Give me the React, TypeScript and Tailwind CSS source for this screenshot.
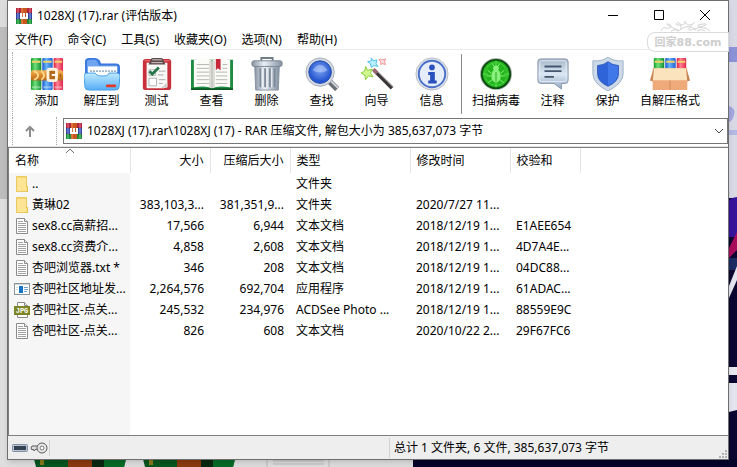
import type { ReactNode } from "react";

/* 小图标: 压缩包 */
function RarIcon() {
  return (
    <svg className="size-4 shrink-0" viewBox="0 0 16 16">
      <rect y="0" width="16" height="5" fill="#b5243f" />
      <rect y="5" width="16" height="6" fill="#3346a8" />
      <rect y="11" width="16" height="5" fill="#1d8a3c" />
      <path d="M0 5h16M0 11h16" stroke="#2b2233" strokeOpacity=".5" />
      <path d="M2 0v5M14 0v5" stroke="#e8798a" />
      <path d="M2 5v6M14 5v6" stroke="#8fa2e6" />
      <path d="M2 11v5M14 11v5" stroke="#6fd07f" />
      <rect x="5" width="6" height="16" fill="#c8561f" />
      <path d="M6 0v16" stroke="#ef935b" />
      <path d="M5 5v5h6V5M8 5v4" fill="none" stroke="#fff" strokeWidth="2" />
    </svg>
  );
}

function FolderIcon() {
  return (
    <svg className="size-4 shrink-0" viewBox="0 0 16 16">
      <path d="M2 1h11v9h1v6H2z" fill="#f7d774" />
      <path d="M3 2h9v13H3z" fill="#fde594" />
      <path d="M2.500 .500h10v15h-10z" fill="none" stroke="#ecc95f" />
      <path d="M12 10.500h1.500v5H12" fill="#fbe08a" stroke="#e5bd4b" />
    </svg>
  );
}

function TextIcon() {
  return (
    <svg className="size-4 shrink-0" viewBox="0 0 16 16">
      <path d="M2.500 .500h8l3 3v12h-11z" fill="#fff" stroke="#8a8a8a" />
      <path d="M10.500 .500v3h3" fill="#eee" stroke="#8a8a8a" />
      <path d="M4 3.500h5M4 5.500h8M4 7.500h8M4 9.500h8M4 11.500h8M4 13.500h8" stroke="#a3a3a3" />
    </svg>
  );
}

function ExeIcon() {
  return (
    <svg className="size-4 shrink-0" viewBox="0 0 16 16">
      <rect x=".5" y="2.500" width="15" height="11" fill="#fff" stroke="#8b9499" />
      <path d="M1 3.500h14" stroke="#cfd6da" />
      <rect x="5" y="5" width="4" height="7" fill="#1673c4" />
      <path d="M10 6.500h4M10 8.500h4M10 10.500h3" stroke="#72a7d4" />
      <path d="M2 6.500h2M2 8.500h2" stroke="#d5dde2" />
    </svg>
  );
}

function JpgIcon() {
  return (
    <svg className="size-4 shrink-0" viewBox="0 0 16 16">
      <path d="M3.500 .500h7l3 3v12h-10z" fill="#fff" stroke="#8a8a8a" />
      <path d="M10.500 .500v3h3" fill="#eee" stroke="#8a8a8a" />
      <rect y="4" width="16" height="9" fill="#7d8527" />
      <text x="8" y="11" fontSize="7" fontWeight="700" textAnchor="middle" fill="#fff" fontFamily="Liberation Mono, monospace">
        JPG
      </text>
    </svg>
  );
}

/* 工具栏图标 */
function BigIcon({ children }: { children: ReactNode }) {
  return (
    <svg className="size-[34px] shrink-0" viewBox="0 0 36 36">
      {children}
    </svg>
  );
}

const addIcon = (
  <BigIcon>
    <defs>
      <linearGradient id="bookG">
        <stop offset="0" stopColor="#159a2b" />
        <stop offset=".4" stopColor="#6fe07a" />
        <stop offset="1" stopColor="#118a35" />
      </linearGradient>
      <linearGradient id="bookB">
        <stop offset="0" stopColor="#1a58c8" />
        <stop offset=".4" stopColor="#6ab4fa" />
        <stop offset="1" stopColor="#1c5fd0" />
      </linearGradient>
      <linearGradient id="bookR">
        <stop offset="0" stopColor="#d81f40" />
        <stop offset=".4" stopColor="#ff7f90" />
        <stop offset="1" stopColor="#e0274f" />
      </linearGradient>
      <linearGradient id="belt" x2="0" y2="1">
        <stop offset="0" stopColor="#f3b85a" />
        <stop offset=".5" stopColor="#da8a2a" />
        <stop offset="1" stopColor="#b0651a" />
      </linearGradient>
    </defs>
    <rect x="1" y="1" width="11" height="34" rx="1" fill="url(#bookG)" />
    <rect x="13" y="1" width="11" height="34" rx="1" fill="url(#bookB)" />
    <rect x="25" y="1" width="10" height="34" rx="1" fill="url(#bookR)" />
    <path d="M2 5h9M14 5h9M26 5h8" stroke="#f2d36b" strokeWidth="2" />
    <path d="M2 32h9M14 32h9M26 32h8" stroke="#fff" strokeOpacity=".35" strokeWidth="2" />
    <rect x="1" y="14" width="34" height="11" rx="2" fill="url(#belt)" />
    <path d="M4 15c6 2 6 7 0 9M12 15c4 3 4 6 0 9" stroke="#ffd98b" fill="none" strokeWidth="2" />
    <rect x="19" y="13" width="9" height="12" rx="2" fill="#b46a1c" stroke="#fff3dc" strokeWidth="3" />
    <path d="M23 19h6" stroke="#fff" strokeWidth="2" />
    <path d="M32 18v3" stroke="#7d430d" />
  </BigIcon>
);

const extractIcon = (
  <svg className="h-[34px] w-[36px] shrink-0" viewBox="0 0 36 36" preserveAspectRatio="none">
    <defs>
      <linearGradient id="fold" x2="0" y2="1">
        <stop offset="0" stopColor="#bfeaff" />
        <stop offset="1" stopColor="#55aef6" />
      </linearGradient>
    </defs>
    <path d="M1 5q0-4 4-4h6q3 0 5 3l1 3h15q4 0 4 4v15H1z" fill="#3b79dc" />
    <path d="M3 5q0-2 3-2h5q2 0 4 6h17q2 0 2 3v4H3z" fill="#6fa4f0" />
    <path d="M4 10h29v12H4z" fill="#fff" />
    <path d="M6 15h26" stroke="#9fb3cc" strokeWidth="2" strokeDasharray="2 1" />
    <path d="M0 20q0-3 3-3h8l2 2q1 1 3 1h5q2 0 3-1l1-2h8q3 0 3 3l-1 12q0 3-4 3H5q-4 0-4-3z" fill="url(#fold)" stroke="#4a9fe8" />
    <rect x="22" y="29" width="10" height="3" rx="1" fill="#e03a2b" />
  </svg>
);

const testIcon = (
  <BigIcon>
    <rect x="3" y="2" width="30" height="33" rx="3" fill="#c8303c" />
    <path d="M5 4h26" stroke="#ef7b82" />
    <path d="M7 6h22v26l-4 1H7z" fill="#f8f8f6" />
    <path d="M22 33l7-6v5z" fill="#cfcfcf" />
    <path d="M11 4q0-3 3-3h8q3 0 3 3l2 4H9z" fill="#5c4a4a" />
    <path d="M13 3h10M12 6h12" stroke="#ddd2d2" />
    <path d="M9.500 13.500h7v6h-7zM9.500 22.500h8v8h-8z" fill="#fff" stroke="#aeb2b4" />
    <path d="M10 15l3 3 7-7" stroke="#27784a" strokeWidth="3" fill="none" />
    <path d="M20 15h7M19 19h6M20 24h7M20 28h4" stroke="#a5a9ab" />
  </BigIcon>
);

const viewIcon = (
  <svg className="h-[34px] w-[42px] shrink-0" viewBox="0 0 44 36" preserveAspectRatio="none">
    <path d="M0 3h44v32H0z" fill="#1e8b41" />
    <path d="M0 34h44" stroke="#0d5725" strokeWidth="2" />
    <path d="M3 3q13-3 19 1 6-4 19-1v29q-13-2-19 1-6-3-19-1z" fill="#fbfbf8" />
    <path d="M22 4v29" stroke="#8f8f8c" />
    <path d="M20 4v28M24 4v28" stroke="#dcdcd6" strokeWidth="2" />
    <path d="M6 8h13M6 12h13M6 16h13M6 20h13M6 24h13M6 28h13M33 8h5M33 12h5M26 16h12M26 20h12M26 24h12M26 28h12" stroke="#b4b4b0" />
    <path d="M26 2h5v12l-3-2-2 2z" fill="#c6283a" />
  </svg>
);

const deleteIcon = (
  <BigIcon>
    <defs>
      <linearGradient id="can">
        <stop offset="0" stopColor="#8793a1" />
        <stop offset=".4" stopColor="#eaf0f6" />
        <stop offset="1" stopColor="#8391a0" />
      </linearGradient>
    </defs>
    <path d="M12 4V1h12v3" fill="none" stroke="#727d8a" strokeWidth="2" />
    <path d="M5 9h26l-1 26H6z" fill="url(#can)" stroke="#8591a0" />
    <path d="M11 12v20M16 12v20M21 12v20M26 12v20" stroke="#7e8a99" strokeWidth="2" />
    <path d="M13 12v20M18 12v20M23 12v20" stroke="#f4f8fb" />
    <rect x="2" y="4" width="32" height="6" rx="2" fill="url(#can)" stroke="#7a8694" />
  </BigIcon>
);

const findIcon = (
  <BigIcon>
    <defs>
      <radialGradient id="lens" cy=".4">
        <stop offset="0" stopColor="#7fa4f5" />
        <stop offset="1" stopColor="#2456cf" />
      </radialGradient>
    </defs>
    <path d="M26 26l8 8" stroke="#6a6f75" strokeWidth="6" />
    <path d="M27 25l8 8" stroke="#d3d8dd" strokeWidth="2" />
    <circle cx="16" cy="16" r="15" fill="#d6dce4" stroke="#a2acb8" />
    <circle cx="16" cy="16" r="12" fill="url(#lens)" stroke="#2c4fa8" />
    <path d="M8 14q8-11 16 0-8 5-16 0z" fill="#c6dafc" fillOpacity=".5" />
  </BigIcon>
);

const wizardIcon = (
  <BigIcon>
    <path d="M15 14l19 19" stroke="#3a3536" strokeWidth="4" />
    <path d="M16 13l19 19" stroke="#a9a5a5" />
    <path d="M14 13l4 4" stroke="#9b6a70" strokeWidth="4" />
    <path d="M6 10l2 4 5-1-2 4 3 4-5-1-3 4-1-5-4-2 4-2z" fill="#d3f58f" stroke="#86cf37" />
    <path d="M12 1l2 3 4-1-1 4 2 3-4-1-3 2-1-4-3-2 4-1z" fill="#b7efff" stroke="#4dbde6" />
    <path d="M22 2l2 1 3-1-1 3 1 3-3-1-2 1v-3l-2-2z" fill="#ffe0e0" stroke="#f08d8d" />
  </BigIcon>
);

const infoIcon = (
  <BigIcon>
    <circle cx="18" cy="18" r="17" fill="#dfe3e9" stroke="#b5bbc4" />
    <circle cx="18" cy="18" r="14" fill="#e5ecfa" stroke="#4a6fc8" strokeWidth="2" />
    <circle cx="18" cy="11" r="3" fill="#2a50c0" />
    <path d="M14 16h7v9h2v3h-9v-3h2v-6h-2z" fill="#2a50c0" />
  </BigIcon>
);

const virusIcon = (
  <BigIcon>
    <circle cx="18" cy="18" r="17" fill="#b2bab2" />
    <circle cx="18" cy="18" r="15" fill="#22b51c" stroke="#0b4d10" strokeWidth="2" />
    <path d="M18 4v6M18 27v5M4 18h5M27 18h5" stroke="#6ae85e" />
    <circle cx="18" cy="18" r="12" fill="none" stroke="#4ace40" />
    <ellipse cx="18" cy="20" rx="5" ry="7" fill="#8af07c" />
    <circle cx="18" cy="12" r="3" fill="#8af07c" />
    <path d="M13 17l-4-3M13 20H8M14 24l-4 3M23 17l4-3M23 20h5M22 24l4 3M16 10l-2-3M20 10l2-3" stroke="#8af07c" />
    <path d="M18 16v10" stroke="#18a816" />
  </BigIcon>
);

const commentIcon = (
  <BigIcon>
    <defs>
      <linearGradient id="bubble" x2="0" y2="1">
        <stop offset="0" stopColor="#a5b5c8" />
        <stop offset=".5" stopColor="#dbe7f4" />
        <stop offset="1" stopColor="#93aac3" />
      </linearGradient>
    </defs>
    <path d="M5 2h26q3 0 3 3v20q0 3-3 3h-4v6l-8-6H5q-3 0-3-3V5q0-3 3-3z" fill="url(#bubble)" stroke="#8797aa" />
    <rect x="4" y="4" width="28" height="22" rx="2" fill="none" stroke="#e4edf6" />
    <path d="M9 10h18M9 15h18M9 21h10" stroke="#44566c" strokeWidth="2" />
  </BigIcon>
);

const protectIcon = (
  <BigIcon>
    <path d="M18 0q6 5 16 4v14q0 10-16 18Q2 28 2 18V4q10 1 16-4z" fill="#cbd9e8" stroke="#9eb0c4" />
    <path d="M18 5q5 4 11 4v9q0 8-11 13Q7 26 7 18V9q6 0 11-4z" fill="#2f63d8" />
    <path d="M18 5q5 4 11 4v9q0 8-11 13z" fill="#4078ea" />
    <path d="M18 5q5 4 11 4v9q0 8-11 13Q7 26 7 18V9q6 0 11-4z" fill="none" stroke="#3158b8" />
  </BigIcon>
);

const sfxIcon = (
  <svg className="h-[34px] w-[42px] shrink-0" viewBox="0 0 44 36" preserveAspectRatio="none">
    <rect x="5" y="1" width="11" height="14" rx="1" fill="url(#bookG)" />
    <rect x="17" y="1" width="11" height="14" rx="1" fill="url(#bookB)" />
    <rect x="29" y="1" width="10" height="14" rx="1" fill="url(#bookR)" />
    <path d="M6 5h9M18 5h9M30 5h8" stroke="#f2d36b" strokeWidth="2" />
    <path d="M4 12h36v23H4z" fill="#efaa7c" />
    <path d="M5 12h34l1 13H4z" fill="#fbe3bd" />
    <path d="M5 11L1 25l3 1zM39 11l4 14-3 1z" fill="#c98252" />
    <path d="M4 25h36v10H4z" fill="#efaa7c" />
    <path d="M22 25v10" stroke="#d08a5c" />
  </svg>
);

const tools = [
  { label: "添加", icon: addIcon },
  { label: "解压到", icon: extractIcon },
  { label: "测试", icon: testIcon },
  { label: "查看", icon: viewIcon },
  { label: "删除", icon: deleteIcon },
  { label: "查找", icon: findIcon },
  { label: "向导", icon: wizardIcon },
  { label: "信息", icon: infoIcon },
];

const extraTools = [
  { label: "扫描病毒", icon: virusIcon },
  { label: "注释", icon: commentIcon },
  { label: "保护", icon: protectIcon },
  { label: "自解压格式", icon: sfxIcon },
];

const menus = ["文件(F)", "命令(C)", "工具(S)", "收藏夹(O)", "选项(N)", "帮助(H)"];

const files = [
  { icon: <FolderIcon />, name: "..", size: "", packed: "", type: "文件夹", time: "", crc: "" },
  { icon: <FolderIcon />, name: "黃琳02", size: "383,103,3...", packed: "381,351,9...", type: "文件夹", time: "2020/7/27 11...", crc: "" },
  { icon: <TextIcon />, name: "sex8.cc高薪招...", size: "17,566", packed: "6,944", type: "文本文档", time: "2018/12/19 1...", crc: "E1AEE654" },
  { icon: <TextIcon />, name: "sex8.cc资费介...", size: "4,858", packed: "2,608", type: "文本文档", time: "2018/12/19 1...", crc: "4D7A4E..." },
  { icon: <TextIcon />, name: "杏吧浏览器.txt *", size: "346", packed: "208", type: "文本文档", time: "2018/12/19 1...", crc: "04DC88..." },
  { icon: <ExeIcon />, name: "杏吧社区地址发...", size: "2,264,576", packed: "692,704", type: "应用程序", time: "2018/12/19 1...", crc: "61ADAC..." },
  { icon: <JpgIcon />, name: "杏吧社区-点关...", size: "245,532", packed: "234,976", type: "ACDSee Photo ...", time: "2018/12/19 1...", crc: "88559E9C" },
  { icon: <TextIcon />, name: "杏吧社区-点关...", size: "826", packed: "608", type: "文本文档", time: "2020/10/22 2...", crc: "29F67FC6" },
];

function ToolButton({ label, icon }: { label: string; icon: ReactNode }) {
  return (
    <button type="button" className="flex min-w-[55px] flex-col items-center gap-[2px] px-[5px]">
      {icon}
      <span className="whitespace-nowrap leading-4">{label}</span>
    </button>
  );
}

/* 窗口后面的桌面 */
function Desktop() {
  return (
    <div className="absolute inset-0 flex flex-col overflow-hidden bg-[#dedede]">
      <div className="flex min-h-0 flex-1 justify-between">
        <div className="flex w-2 flex-col">
          <div className="h-[27px] bg-[#dcdcdc]" />
          <div className="h-[172px] bg-[#bdbdbd]" />
        </div>
        <svg className="h-[459px] w-2" viewBox="0 0 8 459">
          <rect width="8" height="459" fill="#0b0730" />
          <rect width="8" height="198" fill="#d9d9e6" />
          <rect y="47" width="8" height="15" fill="#8c92d6" />
          <path d="M0 106q7 2 5 9t-5 7z" fill="#a3a6dc" />
          <rect y="130" width="8" height="5" fill="#b5b8e4" />
          <path d="M0 200q4-3 8-3v40H0z" fill="#35149a" />
          <path d="M0 248l8-16v18l-8 8z" fill="#a80d5c" />
          <path d="M0 258h8v12H0z" fill="#1b2a60" />
          <path d="M0 286l8-20v14l-8 18z" fill="#e4e4ee" />
          <rect y="367" width="8" height="8" fill="#e8e8ee" />
          <path d="M0 383h8v27l-8 2z" fill="#e4e4ee" />
        </svg>
      </div>
      <div className="flex h-2">
        <svg className="h-2 w-[413px]" viewBox="0 0 413 8">
          <path d="M34 0h92l-2 8H36zM143 0h92l-2 8h-88z" fill="#07561f" />
          <path d="M92 0h34l-2 8H92zM201 0h34l-2 8h-32z" fill="#056b26" />
          <path d="M68 0h24v8H68zM177 0h24v8h-24z" fill="#8a3a10" />
          <path d="M92 0h12v8H92zM201 0h12v8h-12z" fill="#0a2710" />
          <path d="M40 0h4v6h-4zM149 0h4v6h-4z" fill="#8a7a1c" />
          <path d="M267 0v8M329 0v8M273 2h51M273 5h51" stroke="#b9b9b9" />
        </svg>
        <div className="flex-1 bg-[#07042a]" />
      </div>
    </div>
  );
}

function Watermark() {
  return (
    <div className="pointer-events-none absolute right-2 top-5 flex w-[82px] flex-col">
      <svg className="h-3 w-[82px]" viewBox="0 0 82 12">
        <path
          d="M14 11q1-4 5-3t5-1-3-3 5 4 8-1-4-4 3 2 5-4q1 4 4 4t5-2-4 4 8 1 5-4-3 3 5 1 5 3M33 10q8-7 16 0M24 11q4-3 8 0M50 11q4-3 8 0"
          fill="none"
          stroke="#d4d4d4"
        />
      </svg>
      <div className="h-5 rounded-l-lg border border-[#dadada] bg-white text-center font-['DejaVu_Sans','Noto_Sans_CJK_SC',sans-serif] text-[11px] font-bold leading-5 text-[#cecece]">
        回家88.com
      </div>
    </div>
  );
}

export default function App() {
  return (
    <div className="relative h-screen font-['Noto_Sans','Noto_Sans_CJK_SC',sans-serif] text-xs text-black">
      <Desktop />
      <div className="relative h-full pb-[7px] pl-[7px] pr-2">
        <div className="flex h-full flex-col border border-[#6e6e6e] bg-white shadow-md">
          {/* 标题栏 */}
          <header className="flex h-[29px] shrink-0 items-center justify-between pl-2">
            <div className="flex items-center gap-[5px]">
              <RarIcon />
              <h1 className="whitespace-nowrap">1028XJ (17).rar (评估版本)</h1>
            </div>
            <div className="flex">
              <button type="button" aria-label="最小化" className="flex w-[46px] justify-center">
                <svg className="size-[11px]" viewBox="0 0 11 11">
                  <path d="M0 5.500h10" stroke="#000" />
                </svg>
              </button>
              <button type="button" aria-label="最大化" className="flex w-[46px] justify-center">
                <svg className="size-[11px]" viewBox="0 0 11 11">
                  <path d="M.5.5h9v9h-9z" fill="none" stroke="#000" />
                </svg>
              </button>
              <button type="button" aria-label="关闭" className="flex w-[46px] justify-center">
                <svg className="size-[11px]" viewBox="0 0 11 11">
                  <path d="M0 0l10 10M10 0L0 10" stroke="#000" />
                </svg>
              </button>
            </div>
          </header>

          {/* 菜单 */}
          <nav className="flex h-5 shrink-0 items-center gap-[15px] border-b border-[#ececec] pl-[7px] pt-px">
            {menus.map((m) => (
              <button key={m} type="button" className="whitespace-nowrap leading-4">
                {m}
              </button>
            ))}
          </nav>

          {/* 工具栏 */}
          <div className="flex h-[66px] shrink-0 pl-1 pt-[2px]">
            <div className="mr-[6px] border-l border-dotted border-[#a8a8a8]" />
            <div className="flex pt-[5px]">
              {tools.map((t) => (
                <ToolButton key={t.label} label={t.label} icon={t.icon} />
              ))}
            </div>
            <div className="my-[2px] ml-[2px] mr-[5px] w-px shrink-0 bg-[#8c8c8c]" />
            <div className="flex pt-[5px]">
              {extraTools.map((t) => (
                <ToolButton key={t.label} label={t.label} icon={t.icon} />
              ))}
            </div>
          </div>

          {/* 地址栏 */}
          <div className="flex h-[31px] shrink-0 items-center border-b border-[#e3e3e3] pl-1">
            <div className="h-7 border-l border-dotted border-[#a8a8a8]" />
            <button type="button" aria-label="向上" className="flex w-[43px] justify-center pr-[9px]">
              <svg className="size-3" viewBox="0 0 12 12">
                <path d="M6 12V2M2 6l4-4 4 4" fill="none" stroke="#8c8c8c" strokeWidth="2" />
              </svg>
            </button>
            <div className="h-7 border-l border-dotted border-[#a8a8a8]" />
            <label className="ml-[6px] flex h-[26px] flex-1 items-center border border-[#767676] pl-[2px] pr-[3px]">
              <RarIcon />
              <select aria-label="地址" className="ml-[5px] flex-1 appearance-none bg-transparent outline-none">
                <option>1028XJ (17).rar\1028XJ (17) - RAR 压缩文件, 解包大小为 385,637,073 字节</option>
              </select>
              <svg className="size-[10px]" viewBox="0 0 10 10">
                <path d="M1 3l4 4 4-4" fill="none" stroke="#4a4a4a" />
              </svg>
            </label>
          </div>

          {/* 文件列表 */}
          <div className="relative min-h-0 flex-1 overflow-hidden border-y border-l border-[#7b807b] bg-[linear-gradient(to_right,#f6f6f6_121px,#fff_121px)]">
            <table className="w-full table-fixed whitespace-nowrap">
              <colgroup>
                <col className="w-[121px]" />
                <col className="w-20" />
                <col className="w-20" />
                <col className="w-[120px]" />
                <col className="w-[100px]" />
                <col className="w-[70px]" />
                <col />
              </colgroup>
              <thead className="bg-white">
                <tr className="h-[25px] text-left [&>th]:border-r [&>th]:border-[#e5e5e5] [&>th]:px-[6px] [&>th]:font-normal">
                  <th>
                    <svg className="absolute left-[57px] top-0 h-[6px] w-2" viewBox="0 0 8 6">
                      <path d="M0 5l4-4 4 4" fill="none" stroke="#6e6e6e" />
                    </svg>
                    名称
                  </th>
                  <th className="text-right">大小</th>
                  <th className="text-right">压缩后大小</th>
                  <th>类型</th>
                  <th>修改时间</th>
                  <th>校验和</th>
                  <td />
                </tr>
              </thead>
              <tbody>
                {files.map((f, i) => (
                  <tr key={i} className="h-[21px] [&>td]:px-[6px] [&>td]:py-0 [&>td:first-child]:pl-[5px]">
                    <td>
                      <div className="flex items-center gap-[2px]">
                        {f.icon}
                        {f.name}
                      </div>
                    </td>
                    <td className="text-right">{f.size}</td>
                    <td className="text-right">{f.packed}</td>
                    <td>{f.type}</td>
                    <td>{f.time}</td>
                    <td>{f.crc}</td>
                    <td />
                  </tr>
                ))}
              </tbody>
            </table>
          </div>

          {/* 状态栏 */}
          <footer className="flex h-[23px] shrink-0 items-center bg-[#eee]">
            <div className="flex h-4 w-[42px] items-center gap-[2px] border-r border-[#d2d2d2] pl-1">
              <svg className="h-2 w-4" viewBox="0 0 16 8">
                <rect x=".5" y=".5" width="15" height="7" rx="1" fill="#b9c4d0" stroke="#8090a2" />
                <rect x="2" y="2" width="12" height="4" fill="#33404f" />
              </svg>
              <svg className="h-3 w-[18px]" viewBox="0 0 18 12">
                <path d="M8 4H2L1 6l1 2 1-1 1 2 2-2 2 1" fill="#ddd" stroke="#5c5c5c" />
                <circle cx="12" cy="6" r="5" fill="#e8e8e8" stroke="#5c5c5c" />
                <circle cx="12" cy="6" r="2" fill="#fff" stroke="#777" />
              </svg>
            </div>
            <div className="flex h-5 flex-1 items-center border-r border-[#d2d2d2]" />
            <p className="flex h-full w-[338px] items-center justify-between pl-1">
              总计 1 文件夹, 6 文件, 385,637,073 字节
              <svg className="size-[9px] self-end" viewBox="0 0 9 9">
                <path d="M6 0h2v2H6zM3 3h2v2H3zM6 3h2v2H6zM0 6h2v2H0zM3 6h2v2H3zM6 6h2v2H6z" fill="#b3b3b3" />
              </svg>
            </p>
          </footer>
          <Watermark />
        </div>
      </div>
    </div>
  );
}
